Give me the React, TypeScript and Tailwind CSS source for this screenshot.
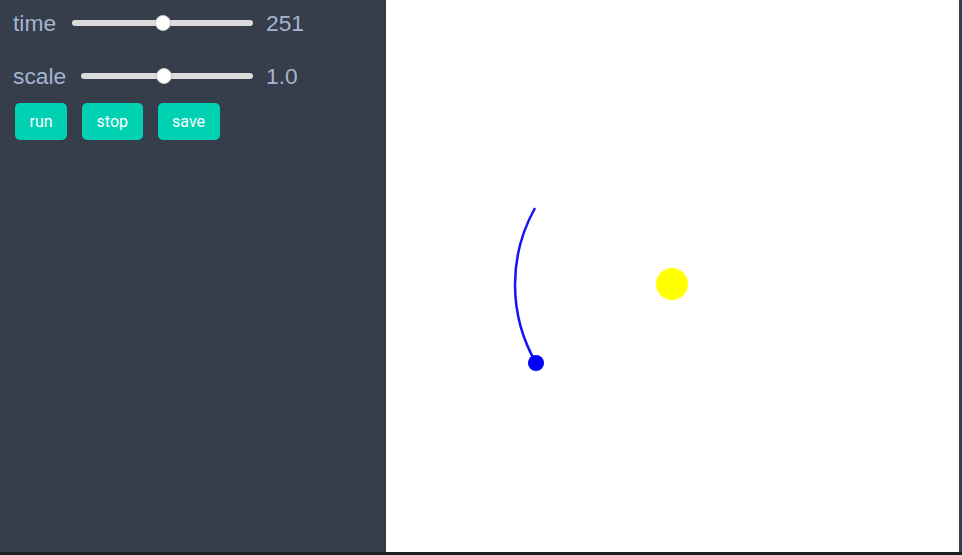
import React from "react"

const font = { fontFamily: '"Liberation Sans", Arial, sans-serif' }

type SliderProps = { pct: number; className?: string }

const Slider: React.FC<SliderProps> = ({ pct, className }) => {
    return (
        <div className={"relative h-4 flex items-center " + (className ?? "")}>
            <div className="h-[6px] w-full rounded-full bg-[#dcdcdc]" />
            <div
                className="absolute top-0 h-4 w-4 -ml-2 rounded-full bg-white border border-[#c8c8c8]"
                style={{ left: pct + "%" }}
            />
        </div>
    )
}

const Btn: React.FC<{ label: string }> = ({ label }) => (
    <button className="h-[37px] px-[14.5px] rounded-[5px] bg-[#00d1b2] text-white text-[16px] leading-none font-[Roboto,sans-serif]">
        {label}
    </button>
)

const Orbit: React.FC = () => {
    // sun at (286,284), orbit radius ~157
    return (
        <svg width="573" height="552" viewBox="0 0 573 552" className="block">
            <path d="M149 208 A157 157 0 0 0 150 363" fill="none" stroke="#1414f5" strokeWidth="2.5" />
            <circle cx="150" cy="363" r="8" fill="#0000ff" />
            <circle cx="286" cy="284" r="16" fill="#ffff00" />
        </svg>
    )
}

export default function App() {
    return (
        <div className="w-[962px] h-[555px] flex flex-col bg-[#363d4b] overflow-hidden" style={font}>
            <div className="flex h-[552px]">
                <div className="w-[386px] shrink-0 pl-[13px] pt-[6px] text-[#a3b4cf] text-[22.8px]">
                    <div className="flex items-center h-[34px] w-[293px]">
                        <span>time</span>
                        <Slider pct={50} className="flex-1 ml-[16px]" />
                        <span className="ml-[13px] w-[40px]">251</span>
                    </div>
                    <div className="flex items-center h-[34px] w-[293px] mt-[19px]">
                        <span>scale</span>
                        <Slider pct={48} className="flex-1 ml-[15px]" />
                        <span className="ml-[13px] w-[40px]">1.0</span>
                    </div>
                    <div className="flex gap-[15px] ml-[2px] mt-[10px]">
                        <Btn label="run" />
                        <Btn label="stop" />
                        <Btn label="save" />
                    </div>
                </div>
                <div className="w-[573px] h-[552px] bg-white shrink-0">
                    <Orbit />
                </div>
            </div>
            <div className="h-[3px] bg-[#1e1f22]" />
        </div>
    )
}
